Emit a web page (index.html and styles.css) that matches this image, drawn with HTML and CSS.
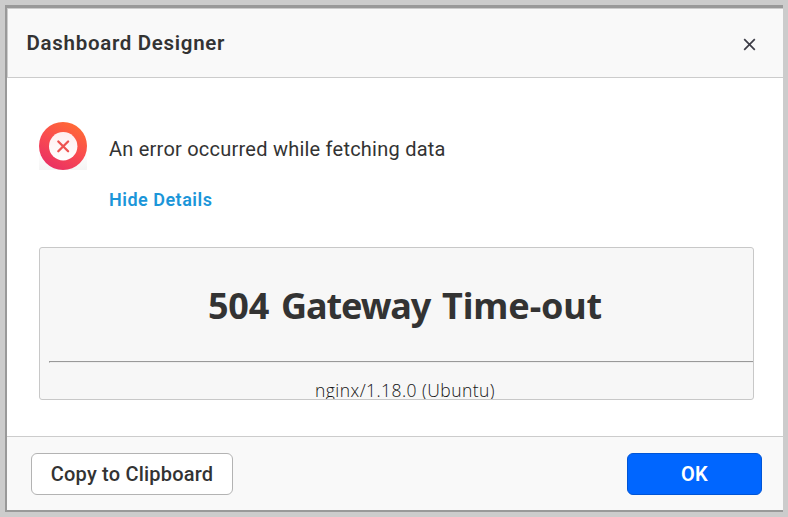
FILE: index.html
```html
<!DOCTYPE html>
<html lang="en">
<head>
<meta charset="utf-8">
<title>Dashboard Designer</title>
<link rel="stylesheet" href="styles.css">
</head>
<body>
<section class="dialog" role="dialog">
  <header class="header">
    <h2 class="title"><span>Dashboard Designer</span></h2>
    <button class="close" aria-label="Close"><svg width="13" height="13" viewBox="0 0 13 13"><path d="M1.2 1.2 11.8 11.8M11.8 1.2 1.2 11.8"/></svg></button>
  </header>
  <main class="content">
    <div class="message">
      <svg class="error-icon" width="48" height="49" viewBox="0 0 48 49">
        <defs>
          <linearGradient id="ring" x1="0.75" y1="0.05" x2="0.25" y2=".95"><stop offset="0" stop-color="#ff6935"/><stop offset=".5" stop-color="#f94b50"/><stop offset="1" stop-color="#ea3163"/></linearGradient>
          <linearGradient id="base" x1="0" y1="0" x2="0" y2="1"><stop offset=".6" stop-color="#fff"/><stop offset="1" stop-color="#f5f5f5"/></linearGradient>
          <linearGradient id="disc" x1="0" y1="0" x2="0" y2="1"><stop offset="0" stop-color="#ffeeee"/><stop offset="1" stop-color="#fff"/></linearGradient>
        </defs>
        <path fill="url(#base)" d="M0 0h48v48H0z"/>
        <circle cx="24" cy="24" r="24" fill="url(#ring)"/>
        <circle cx="24.2" cy="24.2" r="14.2" fill="url(#disc)"/>
        <path class="cross" d="M19.3 19.5 29.1 29.3M29.1 19.5 19.3 29.3"/>
      </svg>
      <div class="texts">
        <p class="text"><span>An error occurred while fetching data</span></p>
        <a class="toggle">Hide Details</a>
      </div>
    </div>
    <div class="details">
      <h1 class="status">504 <span class="tight">Gateway</span> Time-out</h1>
      <hr class="rule">
      <p class="server">nginx/1.18.0 (Ubuntu)</p>
    </div>
  </main>
  <footer class="footer">
    <button class="button copy">Copy to Clipboard</button>
    <button class="button ok">OK</button>
  </footer>
</section>
</body>
</html>
```
FILE: styles.css
```css
* { box-sizing: border-box; }
body {
  margin: 0;
  height: 517px;
  padding: 5px 5px 5px 5px;
  background: #ccc;
  color: #333;
  font-family: Roboto, "Liberation Sans", sans-serif;
  overflow: hidden;
}
.dialog {
  width: 778px;
  height: 507px;
  display: flex;
  flex-direction: column;
  border: solid #999;
  border-width: 3px 0 2px 2px;
  background: #fff;
}
.header {
  height: 70px;
  display: flex;
  align-items: center;
  justify-content: space-between;
  padding: 0 27px 0 18.5px;
  background: #f9f9f9;
  border: solid #ccc;
  border-width: 1px 0 1px 1px;
}
.title { margin: 0; font-size: 20.5px; font-weight: 600; line-height: 24px; letter-spacing: .7px; }
.close { display: flex; padding: 3px 0 0; border: 0; background: none; }
.close path { stroke: #3c3c46; stroke-width: 1.7; fill: none; }
.content { flex: 1; padding: 44px 29px 0 32px; }
.message { display: flex; height: 125px; gap: 22px; }
.error-icon { flex: none; }
.cross { stroke: #ed5350; stroke-width: 2.3; stroke-linecap: round; }
.texts { padding-top: 15px; }
.text { margin: 0; font-size: 20px; line-height: 24px; letter-spacing: .23px; }
.toggle { display: block; margin-top: 28px; color: #1b96d9; font-size: 18px; font-weight: 600; line-height: 22px; letter-spacing: .5px; }
.details {
  height: 153px;
  padding-left: 9px;
  overflow: hidden;
  border: 1px solid #c8c8c8;
  border-radius: 3px;
  background: #f7f7f7;
}
.status, .rule, .server { width: 712px; }
.status {
  margin: 33px 0 31px;
  font: 700 36px/49px "Noto Sans", sans-serif;
  letter-spacing: -.15px;
  word-spacing: 2.6px;
  text-align: center;
}
.tight { letter-spacing: -1.1px; }
.rule { margin: 0; height: 2px; border: 1px solid; border-color: #999 #eee #eee #999; }
.server {
  margin: 15px 0 0;
  color: #151515;
  font: 300 17.5px/24px "Open Sans", sans-serif;
  letter-spacing: .45px;
  text-align: center;
}
.footer {
  height: 74px;
  display: flex;
  align-items: flex-start;
  justify-content: space-between;
  padding: 16px 21px 0 24px;
  border-top: 1px solid #ccc;
  background: #f9f9f9;
}
.button {
  height: 42px;
  padding: 0;
  border: 1px solid #b3b3b3;
  border-radius: 6px;
  background: #fff;
  color: #333;
  font: 500 20px/24px Roboto, sans-serif;
  letter-spacing: .2px;
}
.copy { width: 202px; }
.ok { width: 135px; border-color: #0055d6; background: #06f; color: #fff; font-weight: 600; }
```
